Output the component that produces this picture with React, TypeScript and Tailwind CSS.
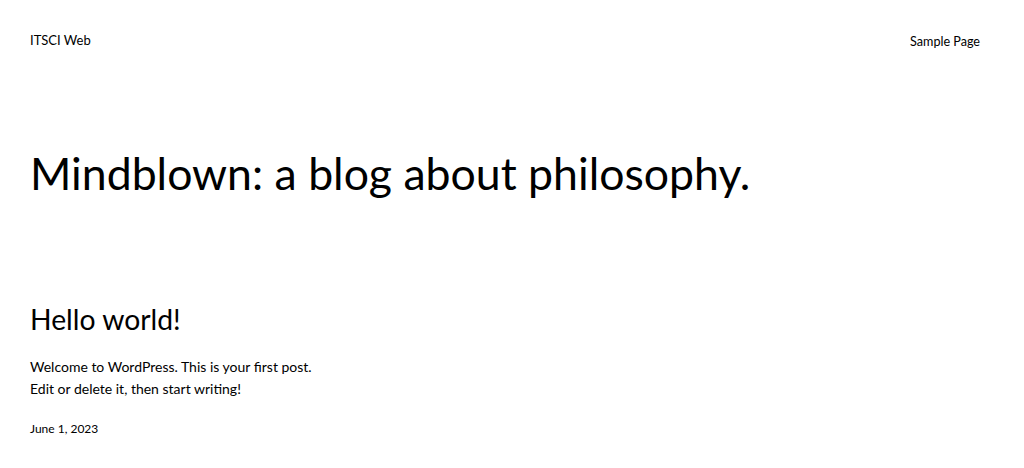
export default function App() {
  return (
    <div className="min-h-[468px] w-full bg-white text-[#000] font-['Lato',sans-serif]">
      <header className="flex items-center justify-between pl-[30px] pr-[44px] pt-[28px]">
        <a className="text-[13px] leading-[20px]">ITSCI Web</a>
        <nav>
          <a className="text-[12.6px] leading-[20px]">Sample Page</a>
        </nav>
      </header>
      <main className="pl-[30px]">
        <h1 className="mt-[93px] text-[44.6px] leading-[56px] font-normal">Mindblown: a blog about philosophy.</h1>
        <article className="mt-[101px]">
          <h2 className="text-[28.3px] leading-[34px]">Hello world!</h2>
          <p className="mt-[20px] text-[14px] leading-[22px]">
            Welcome to WordPress. This is your first post.
            <br />
            Edit or delete it, then start writing!
          </p>
          <p className="mt-[19px] text-[12px] leading-[20px]">June 1, 2023</p>
        </article>
      </main>
    </div>
  );
}
